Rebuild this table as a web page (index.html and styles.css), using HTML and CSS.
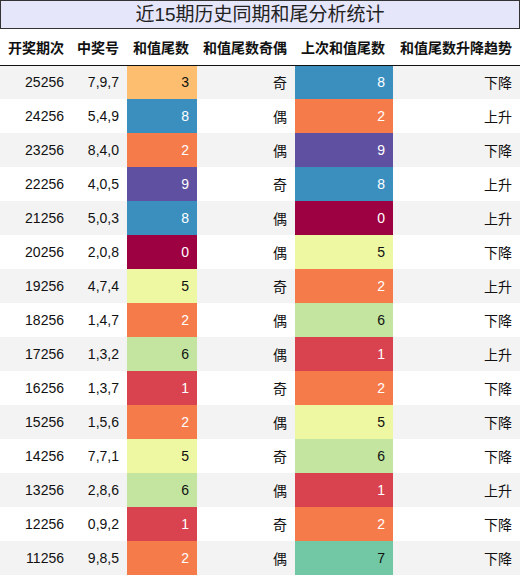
FILE: index.html
```html
<!DOCTYPE html>
<html lang="zh-CN">
<head>
    <meta charset="UTF-8">
    <title>近15期历史同期和尾分析统计</title>
    <link rel="stylesheet" href="styles.css">
</head>
<body>
    <div class="title">近15期历史同期和尾分析统计</div>
    <table class="stats">
        <colgroup>
            <col class="c1"><col class="c2"><col class="c3"><col class="c4"><col class="c5"><col class="c6">
        </colgroup>
        <thead>
            <tr>
                <th>开奖期次</th>
                <th>中奖号</th>
                <th>和值尾数</th>
                <th>和值尾数奇偶</th>
                <th>上次和值尾数</th>
                <th>和值尾数升降趋势</th>
            </tr>
        </thead>
        <tbody>
            <tr><td>25256</td><td>7,9,7</td><td class="d3">3</td><td>奇</td><td class="d8">8</td><td>下降</td></tr>
            <tr><td>24256</td><td>5,4,9</td><td class="d8">8</td><td>偶</td><td class="d2">2</td><td>上升</td></tr>
            <tr><td>23256</td><td>8,4,0</td><td class="d2">2</td><td>偶</td><td class="d9">9</td><td>下降</td></tr>
            <tr><td>22256</td><td>4,0,5</td><td class="d9">9</td><td>奇</td><td class="d8">8</td><td>上升</td></tr>
            <tr><td>21256</td><td>5,0,3</td><td class="d8">8</td><td>偶</td><td class="d0">0</td><td>上升</td></tr>
            <tr><td>20256</td><td>2,0,8</td><td class="d0">0</td><td>偶</td><td class="d5">5</td><td>下降</td></tr>
            <tr><td>19256</td><td>4,7,4</td><td class="d5">5</td><td>奇</td><td class="d2">2</td><td>上升</td></tr>
            <tr><td>18256</td><td>1,4,7</td><td class="d2">2</td><td>偶</td><td class="d6">6</td><td>下降</td></tr>
            <tr><td>17256</td><td>1,3,2</td><td class="d6">6</td><td>偶</td><td class="d1">1</td><td>上升</td></tr>
            <tr><td>16256</td><td>1,3,7</td><td class="d1">1</td><td>奇</td><td class="d2">2</td><td>下降</td></tr>
            <tr><td>15256</td><td>1,5,6</td><td class="d2">2</td><td>偶</td><td class="d5">5</td><td>下降</td></tr>
            <tr><td>14256</td><td>7,7,1</td><td class="d5">5</td><td>奇</td><td class="d6">6</td><td>下降</td></tr>
            <tr><td>13256</td><td>2,8,6</td><td class="d6">6</td><td>偶</td><td class="d1">1</td><td>上升</td></tr>
            <tr><td>12256</td><td>0,9,2</td><td class="d1">1</td><td>奇</td><td class="d2">2</td><td>下降</td></tr>
            <tr><td>11256</td><td>9,8,5</td><td class="d2">2</td><td>偶</td><td class="d7">7</td><td>下降</td></tr>
        </tbody>
    </table>
</body>
</html>
```

FILE: styles.css
```css
* {
    margin: 0;
    padding: 0;
    box-sizing: border-box;
}

body {
    font-family: "Liberation Sans", Arial, "Noto Sans CJK SC", sans-serif;
    color: #111;
    background-color: white;
}

.title {
    width: 520px;
    height: 29px;
    background-color: #e6e6fa;
    border: 1px solid #333;
    text-align: center;
    font-size: 19px;
    line-height: 27px;
    color: #222;
}

.stats {
    width: 520px;
    border-collapse: collapse;
    table-layout: fixed;
    font-size: 14px;
}

.c1 { width: 72px; }
.c2 { width: 55px; }
.c3 { width: 70px; }
.c4 { width: 98px; }
.c5 { width: 98px; }
.c6 { width: 127px; }

.stats th {
    height: 36px;
    padding: 0 8px 0 0;
    text-align: right;
    font-weight: bold;
    color: #111;
    border-bottom: 1px solid #111;
    white-space: nowrap;
}

.stats td {
    height: 34px;
    padding: 0 8px 0 0;
    text-align: right;
    white-space: nowrap;
}

.stats tbody tr:nth-child(odd) {
    background-color: #f3f3f3;
}

.d0 { background-color: #9e0142; color: #fff; }
.d1 { background-color: #d9434f; color: #fff; }
.d2 { background-color: #f57b4b; color: #fff; }
.d3 { background-color: #fdbf6f; color: #111; }
.d5 { background-color: #eef7a2; color: #111; }
.d6 { background-color: #c3e5a0; color: #111; }
.d7 { background-color: #72c8a4; color: #111; }
.d8 { background-color: #3a8fbf; color: #fff; }
.d9 { background-color: #5f50a2; color: #fff; }
```
